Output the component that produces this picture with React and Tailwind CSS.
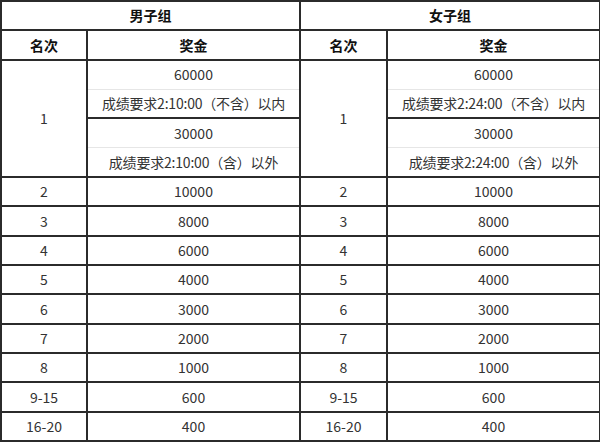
import React from "react";

const rows = [
  ["2", "10000"],
  ["3", "8000"],
  ["4", "6000"],
  ["5", "4000"],
  ["6", "3000"],
  ["7", "2000"],
  ["8", "1000"],
  ["9-15", "600"],
  ["16-20", "400"],
];

const groups = [
  { title: "男子组", time: "2:10:00" },
  { title: "女子组", time: "2:24:00" },
];

const cell = "border-2 border-[#2b2b2b] text-center p-0";
const th = cell + " font-bold text-[14px] text-[#111]";
const td = cell + " text-[14px] text-[#333]";

export default function App() {
  return (
    <div className="w-[600px] h-[443px] bg-white overflow-hidden" style={{ fontFamily: '"Noto Sans CJK SC", "Noto Sans", sans-serif' }}>
      <table className="w-[599px] border-collapse table-fixed">
        <colgroup>
          <col className="w-[86px]" />
          <col className="w-[213px]" />
          <col className="w-[87px]" />
          <col className="w-[213px]" />
        </colgroup>
        <tbody>
          <tr className="h-[29.35px]">
            {groups.map((g) => (
              <th key={g.title} colSpan={2} className={th}>
                {g.title}
              </th>
            ))}
          </tr>
          <tr className="h-[29.35px]">
            {groups.map((g) => (
              <React.Fragment key={g.title}>
                <th className={th}>名次</th>
                <th className={th}>奖金</th>
              </React.Fragment>
            ))}
          </tr>
          <tr className="h-[29.35px]">
            {groups.map((g) => (
              <React.Fragment key={g.title}>
                <td rowSpan={4} className={td}>1</td>
                <td className={td + " border-b-[#e6e6e6] border-b"}>60000</td>
              </React.Fragment>
            ))}
          </tr>
          <tr className="h-[29.35px]">
            {groups.map((g) => (
              <td key={g.title} className={td + " border-t-[#e6e6e6] border-t text-[13px] tracking-[-0.2px]"}>
                成绩要求{g.time}（不含）以内
              </td>
            ))}
          </tr>
          <tr className="h-[29.35px]">
            {groups.map((g) => (
              <td key={g.title} className={td + " border-b-[#e6e6e6] border-b"}>30000</td>
            ))}
          </tr>
          <tr className="h-[29.35px]">
            {groups.map((g) => (
              <td key={g.title} className={td + " border-t-[#e6e6e6] border-t text-[13px] tracking-[-0.2px]"}>
                成绩要求{g.time}（含）以外
              </td>
            ))}
          </tr>
          {rows.map(([rank, prize]) => (
            <tr key={rank} className="h-[29.35px]">
              <td className={td}>{rank}</td>
              <td className={td}>{prize}</td>
              <td className={td}>{rank}</td>
              <td className={td}>{prize}</td>
            </tr>
          ))}
        </tbody>
      </table>
    </div>
  );
}
